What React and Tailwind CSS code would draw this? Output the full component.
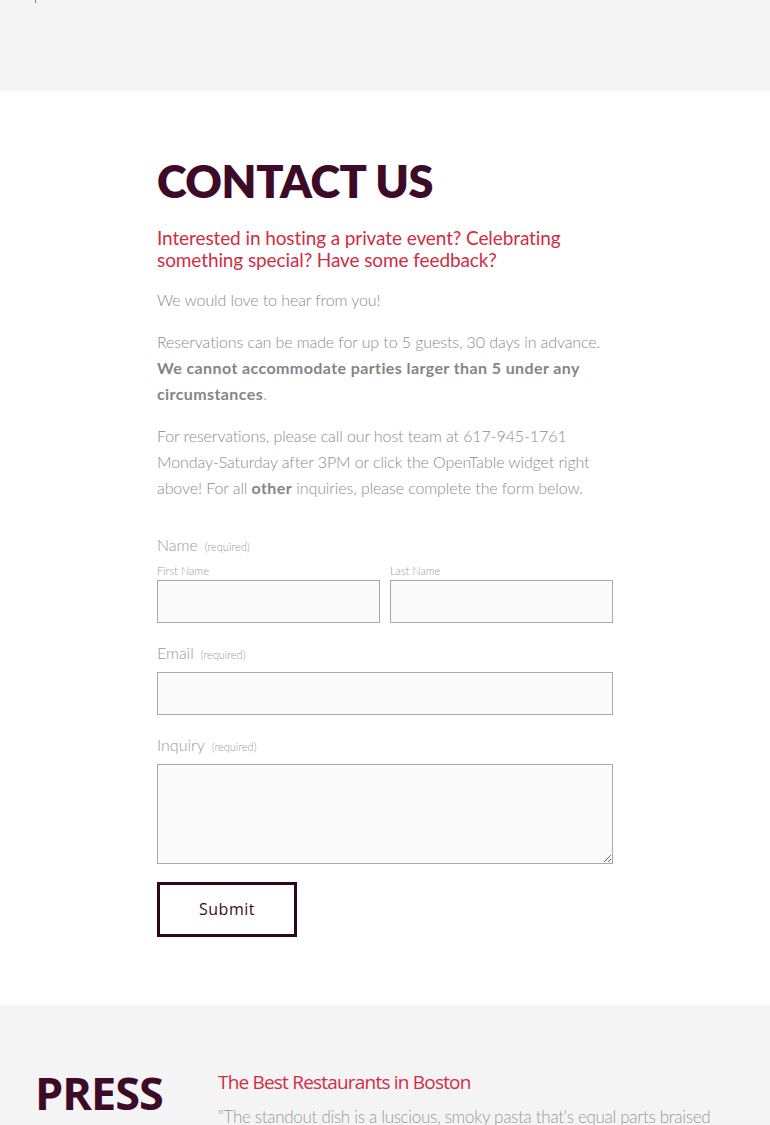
export default function App() {
  return (
    <div className="min-h-[1125px] bg-white font-['Lato',sans-serif]">
      {/* header remnant */}
      <div className="h-[91px] bg-[#f4f4f4] pl-[35px]">
        <div className="h-[3px] w-px bg-[#777]" />
      </div>

      <section className="bg-white pt-[60px] pb-[68px]">
        <div className="w-[456px] ml-[157px]">
          <h1 className="text-[45px] font-extrabold leading-[60px] tracking-[-0.4px] text-[#3d0a27]">
            CONTACT US
          </h1>
          <h2 className="mt-[16px] text-[19px] leading-[22px] text-[#d22c44] tracking-[-0.1px]">
            Interested in hosting a private event? Celebrating something special? Have some feedback?
          </h2>
          <div className="mt-[16px] text-[16px] leading-[26px] text-[#8c8c8c] font-light tracking-[-0.1px]">
            <p>We would love to hear from you!</p>
            <p className="mt-[16px]">
              Reservations can be made for up to 5 guests, 30 days in advance.{" "}
              <strong className="font-bold text-[#858585] tracking-[0.4px]">We cannot accommodate parties larger than 5 under any circumstances</strong>.
            </p>
            <p className="mt-[16px]">
              For reservations, please call our host team at 617-945-1761 Monday-Saturday after 3PM or click the OpenTable widget right above! For all{" "}
              <strong className="font-bold text-[#858585] tracking-[0.4px]">other</strong> inquiries, please complete the form below.
            </p>
          </div>

          <form className="mt-[34px]" onSubmit={(e) => e.preventDefault()}>
            <Label text="Name" />
            <div className="mt-[8px] grid grid-cols-2 gap-[10px]">
              <div>
                <div className="text-[11px] leading-[14px] text-[#999] font-light">First Name</div>
                <input className="mt-[2px] block h-[43px] w-full border border-[#a9a9a9] bg-[#fafafa] outline-none" />
              </div>
              <div>
                <div className="text-[11px] leading-[14px] text-[#999] font-light">Last Name</div>
                <input className="mt-[2px] block h-[43px] w-full border border-[#a9a9a9] bg-[#fafafa] outline-none" />
              </div>
            </div>

            <div className="mt-[20px]">
              <Label text="Email" />
              <input className="mt-[9px] block h-[43px] w-full border border-[#a9a9a9] bg-[#fafafa] outline-none" />
            </div>

            <div className="mt-[20px]">
              <Label text="Inquiry" />
              <textarea className="mt-[8px] block h-[100px] w-full border border-[#a9a9a9] bg-[#fafafa] outline-none" />
            </div>

            <button
              type="submit"
              className="mt-[18px] h-[55px] w-[140px] border-[3px] border-[#2e0619] bg-white text-[16px] tracking-[0.5px] text-[#3d0a27] font-['Open_Sans',sans-serif]"
            >
              Submit
            </button>
          </form>
        </div>
      </section>

      <section className="bg-[#f4f4f4] pt-[60px] pb-10">
        <div className="flex">
          <h2 className="pl-[35px] w-[218px] text-[45px] font-bold leading-[56px] tracking-[-1px] text-[#3d0a27] font-['Open_Sans',sans-serif]">
            PRESS
          </h2>
          <div className="flex-1 pr-[40px]">
            <h3 className="pt-[5px] text-[19px] leading-[24px] text-[#d22c44] font-['Open_Sans',sans-serif] tracking-[-0.8px]">
              The Best Restaurants in Boston
            </h3>
            <p className="mt-[10px] text-[17px] leading-[26px] text-[#999] font-light tracking-[-0.3px]">
              "The standout dish is a luscious, smoky pasta that's equal parts braised short rib and bright tomato."
            </p>
          </div>
        </div>
      </section>
    </div>
  );
}

function Label({ text }) {
  return (
    <div className="flex items-baseline gap-[7px] text-[#999]">
      <span className="text-[16px] leading-[20px] font-light">{text}</span>
      <span className="text-[11px] font-light">(required)</span>
    </div>
  );
}
